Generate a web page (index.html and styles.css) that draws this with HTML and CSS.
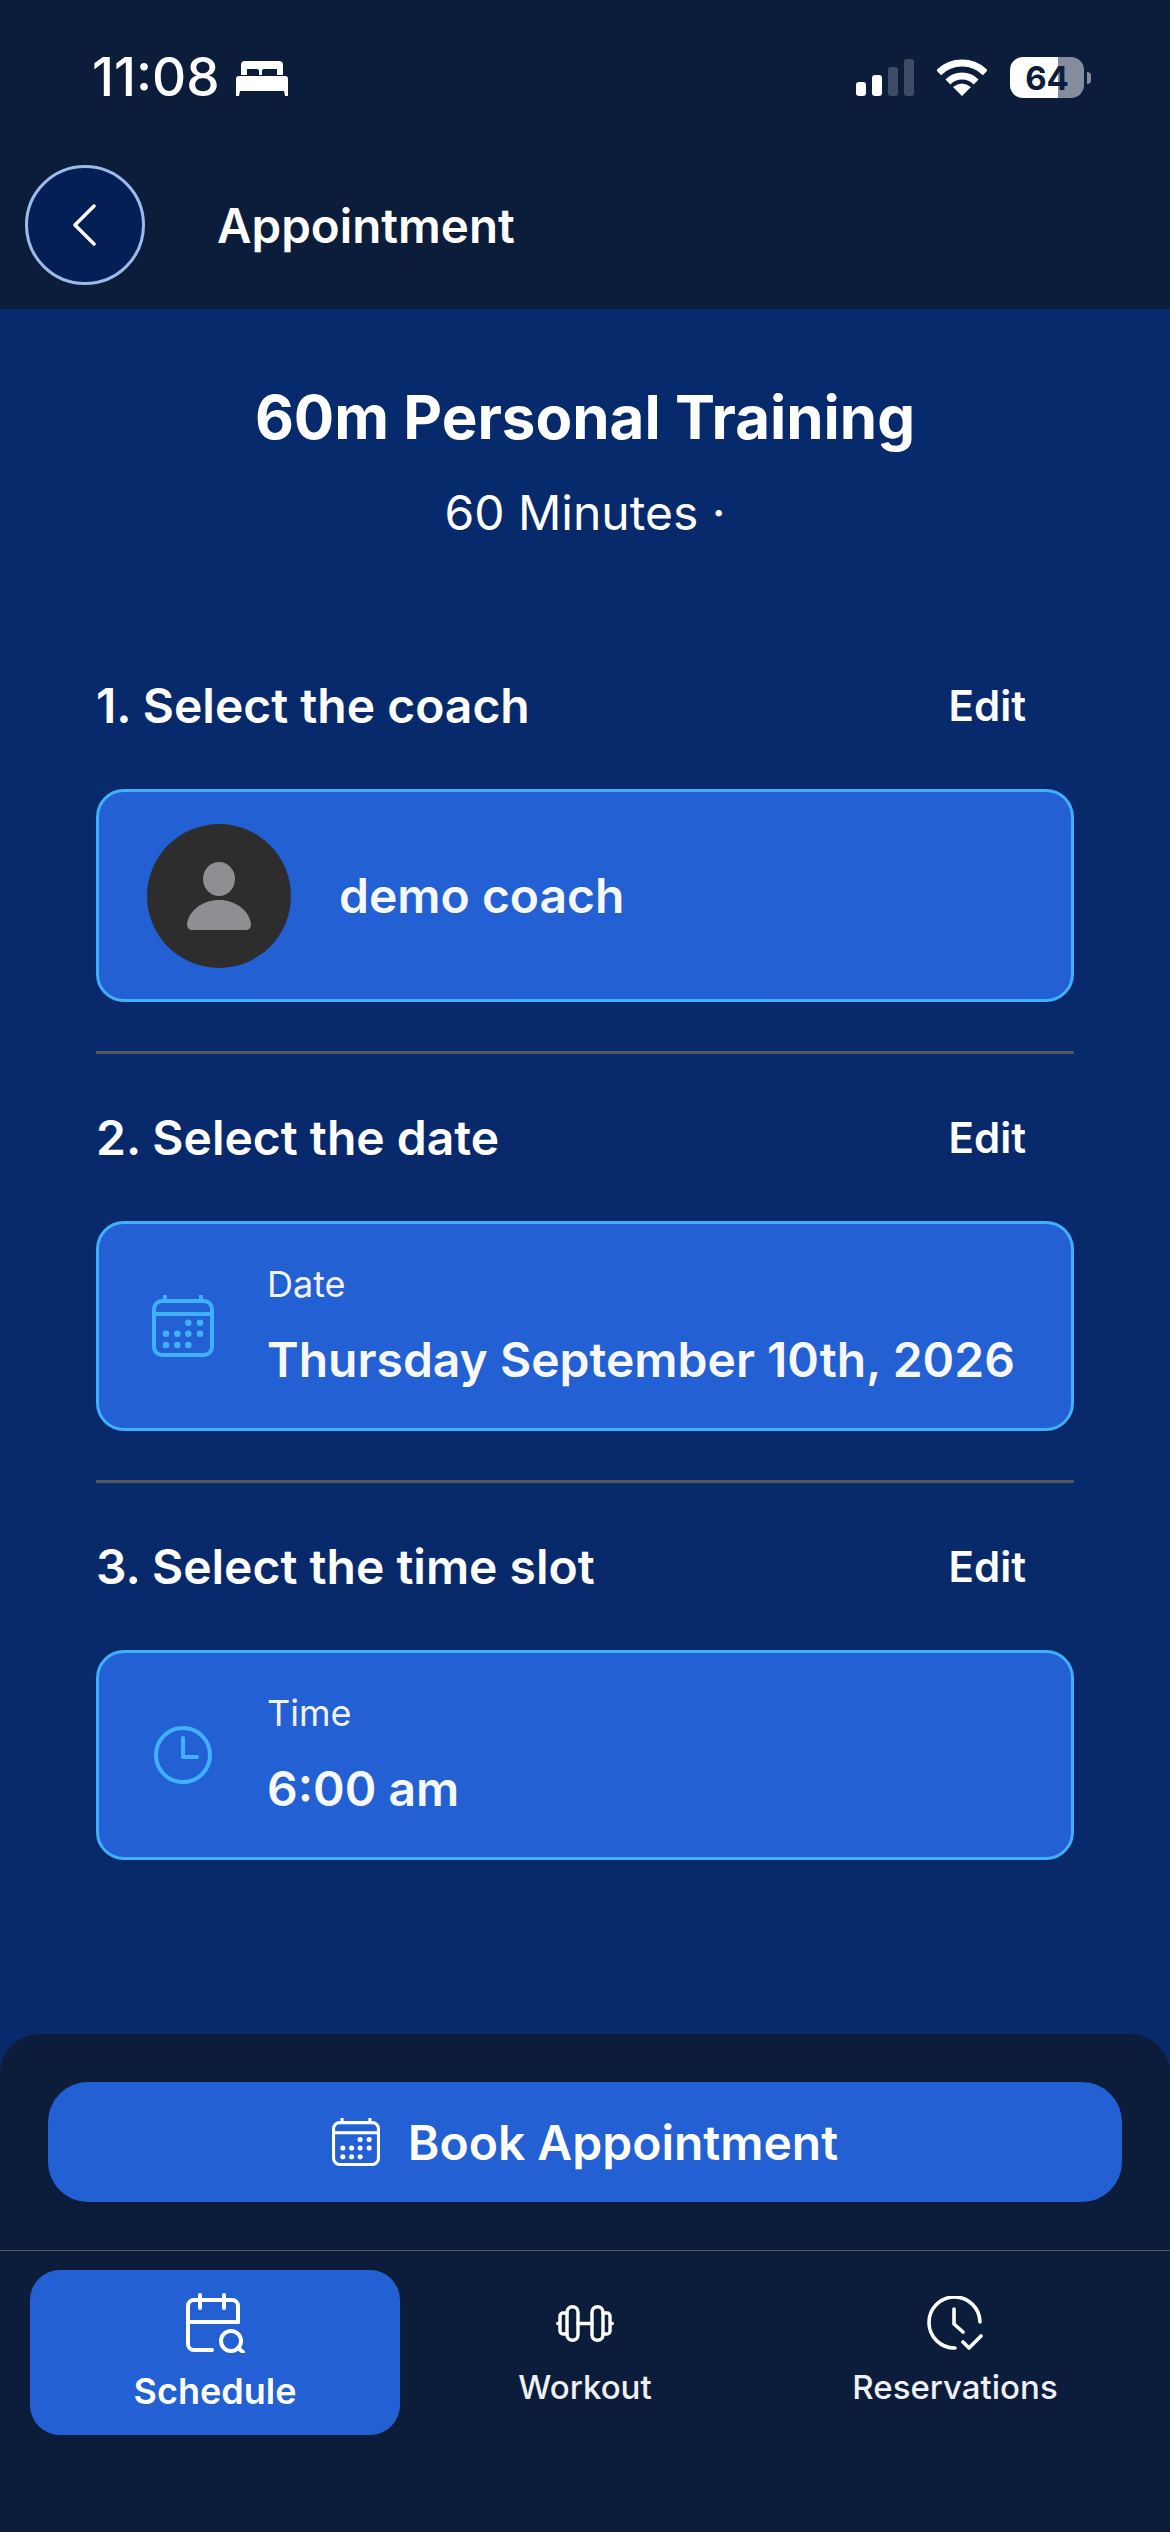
FILE: index.html
```html
<!DOCTYPE html>
<html lang="en">
<head>
  <meta charset="UTF-8" />
  <meta name="viewport" content="width=device-width, initial-scale=1" />
  <title>Appointment</title>
  <link rel="stylesheet" href="styles.css">
</head>
<body>
  <div class="screen">

    <header class="top">
      <div class="status">
        <div class="status-left">
          <span class="clock">11:08</span>
          <svg class="bed" width="52" height="35" viewBox="0 0 52 35" fill="#fff">
            <path fill-rule="evenodd" d="M9 0h34a4 4 0 0 1 4 4v10H5V4a4 4 0 0 1 4-4zM11 8v6h12V10a2 2 0 0 0-2-2zM28 8a2 2 0 0 0-2 2v4h15V8z"/>
            <path d="M3 15h46a3 3 0 0 1 3 3v17h-3l-1-5H4l-1 5H0V18a3 3 0 0 1 3-3z"/>
          </svg>
        </div>
        <div class="status-right">
          <svg width="58" height="37" viewBox="0 0 58 37">
            <rect x="0" y="23" width="10" height="14" rx="3" fill="#fff"/>
            <rect x="16" y="16" width="10" height="21" rx="3" fill="#fff"/>
            <rect x="32" y="8" width="10" height="29" rx="3" fill="#3e4d66"/>
            <rect x="48" y="0" width="10" height="37" rx="3" fill="#3e4d66"/>
          </svg>
          <svg width="50" height="37" viewBox="0 0 50 37" fill="none" stroke="#fff" stroke-width="7">
            <path d="M1.7 13.7a33 33 0 0 1 46.6 0"/>
            <path d="M10.9 22.9a20 20 0 0 1 28.2 0"/>
            <path d="M25 37l-9-9q9-7 18 0z" fill="#fff" stroke="none"/>
          </svg>
          <div class="battery">
            <div class="battery-body"><span class="battery-num">64</span></div>
            <div class="battery-tip"></div>
          </div>
        </div>
      </div>
      <div class="titlebar">
        <button class="back">
          <svg width="24" height="42" viewBox="0 0 24 42" fill="none" stroke="#fff" stroke-width="3.5" stroke-linecap="round" stroke-linejoin="round">
            <path d="M22 2L3 21l19 19"/>
          </svg>
        </button>
        <h1>Appointment</h1>
      </div>
    </header>

    <main class="content">
      <div class="intro">
        <h2>60m Personal Training</h2>
        <p>60 Minutes ·</p>
      </div>

      <section class="step">
        <div class="step-head"><h3>1. Select the coach</h3><a class="edit">Edit</a></div>
        <div class="card coach-card">
          <div class="avatar">
            <svg width="64" height="68" viewBox="0 0 64 68" fill="#8e8f92">
              <ellipse cx="32" cy="17" rx="16" ry="17"/>
              <path d="M0 62C2 48 16 38 32 38s30 10 32 24c0 4-2 6-6 6H6c-4 0-6-2-6-6z"/>
            </svg>
          </div>
          <span class="coach-name">demo coach</span>
        </div>
      </section>

      <section class="step">
        <div class="step-head"><h3>2. Select the date</h3><a class="edit">Edit</a></div>
        <div class="card">
          <svg class="card-icon" width="62" height="62" viewBox="0 0 62 62" fill="#3fb1fb">
            <g fill="none" stroke="#3fb1fb" stroke-width="4">
              <rect x="2" y="6" width="58" height="54" rx="8"/>
              <path d="M2 19h58"/>
            </g>
            <path d="M11 1a2 2 0 0 1 4 0v5h-4zM47 1a2 2 0 0 1 4 0v5h-4z"/>
            <circle cx="36.3" cy="27.7" r="3.3"/><circle cx="48" cy="27.7" r="3.3"/>
            <circle cx="14" cy="38.7" r="3.3"/><circle cx="25.3" cy="38.7" r="3.3"/><circle cx="36.3" cy="38.7" r="3.3"/><circle cx="48" cy="38.7" r="3.3"/>
            <circle cx="14" cy="50" r="3.3"/><circle cx="25.3" cy="50" r="3.3"/><circle cx="36.3" cy="50" r="3.3"/>
          </svg>
          <div class="card-text">
            <span class="label">Date</span>
            <span class="value">Thursday September 10th, 2026</span>
          </div>
        </div>
      </section>

      <section class="step">
        <div class="step-head"><h3>3. Select the time slot</h3><a class="edit">Edit</a></div>
        <div class="card">
          <svg class="card-icon" width="62" height="62" viewBox="0 0 62 62" fill="none" stroke="#3fb1fb" stroke-width="4" stroke-linecap="round" stroke-linejoin="round">
            <circle cx="31" cy="31" r="27"/>
            <path d="M31 14v19h14"/>
          </svg>
          <div class="card-text">
            <span class="label">Time</span>
            <span class="value">6:00 am</span>
          </div>
        </div>
      </section>
    </main>

    <footer class="bottom">
      <div class="book-wrap">
        <button class="book">
          <svg width="48" height="48" viewBox="0 0 62 62" fill="#fff">
            <g fill="none" stroke="#fff" stroke-width="4">
              <rect x="2" y="6" width="58" height="54" rx="8"/>
              <path d="M2 19h58"/>
            </g>
            <path d="M11 1a2 2 0 0 1 4 0v5h-4zM47 1a2 2 0 0 1 4 0v5h-4z"/>
            <circle cx="36.3" cy="27.7" r="3.3"/><circle cx="48" cy="27.7" r="3.3"/>
            <circle cx="14" cy="38.7" r="3.3"/><circle cx="25.3" cy="38.7" r="3.3"/><circle cx="36.3" cy="38.7" r="3.3"/><circle cx="48" cy="38.7" r="3.3"/>
            <circle cx="14" cy="50" r="3.3"/><circle cx="25.3" cy="50" r="3.3"/><circle cx="36.3" cy="50" r="3.3"/>
          </svg>
          Book Appointment
        </button>
      </div>
      <nav class="tabs">
        <a class="tab active">
          <div class="tab-icon">
            <svg width="60" height="60" viewBox="0 0 60 60" fill="none" stroke="#fff" stroke-width="4" stroke-linecap="round" stroke-linejoin="round">
              <path d="M27 57H9a6 6 0 0 1-6-6V13a6 6 0 0 1 6-6h38a6 6 0 0 1 6 6v16"/>
              <path d="M3 29h50M15 2v13M39 2v13"/>
              <circle cx="46" cy="48" r="10"/>
              <path d="M53 55l5 4"/>
            </svg>
          </div>
          <span>Schedule</span>
        </a>
        <a class="tab">
          <div class="tab-icon">
            <svg width="58" height="37" viewBox="0 0 58 37" fill="none" stroke="#fff" stroke-width="3.4" stroke-linecap="round" stroke-linejoin="round">
              <rect x="11" y="1.7" width="11" height="33.6" rx="5.5"/>
              <rect x="36" y="1.7" width="11" height="33.6" rx="5.5"/>
              <path d="M11 8H7a3 3 0 0 0-3 3v15a3 3 0 0 0 3 3h4M47 8h4a3 3 0 0 1 3 3v15a3 3 0 0 1-3 3h-4M22 18.5h14M4 18.5H1.7M54 18.5h2.3"/>
            </svg>
          </div>
          <span>Workout</span>
        </a>
        <a class="tab">
          <div class="tab-icon">
            <svg width="56" height="54" viewBox="0 0 56 54" fill="none" stroke="#fff" stroke-width="3.6" stroke-linecap="round" stroke-linejoin="round">
              <path d="M53 26a25.5 25.5 0 1 0-25 26"/>
              <path d="M27 13v15l9 8"/>
              <path d="M36 46l6 6 12-12"/>
            </svg>
          </div>
          <span>Reservations</span>
        </a>
      </nav>
    </footer>

  </div>
</body>
</html>
```

FILE: styles.css
```css
* { box-sizing: border-box; }
html, body { margin: 0; padding: 0; }
body { font-family: Inter, 'Liberation Sans', sans-serif; background: #0b1d3a; color: #fff; }
h1, h2, h3, p { margin: 0; }

.screen { width: 1170px; height: 2532px; display: flex; flex-direction: column; overflow: hidden; }

/* header */
.top { background: #0b1d3a; height: 309px; flex: none; }
.status { height: 165px; display: flex; justify-content: space-between; padding: 51px 79px 0 92px; }
.status-left { display: flex; align-items: flex-start; gap: 16px; }
.clock { font-size: 53px; line-height: 52px; font-weight: 500; }
.bed { margin-top: 10px; }
.status-right { display: flex; align-items: center; gap: 23px; height: 53px; }
.battery { display: flex; align-items: center; }
.battery-body { width: 74px; height: 41px; border-radius: 13px; background: linear-gradient(90deg, #fff 0 65%, #858d9c 65%); display: flex; align-items: center; justify-content: center; }
.battery-num { font-size: 33px; font-weight: 700; color: #0b1d3a; }
.battery-tip { width: 4px; height: 12px; background: #858d9c; border-radius: 0 6px 6px 0; margin-left: 3px; }

.titlebar { display: flex; align-items: center; padding-left: 25px; gap: 72px; }
.back { width: 120px; height: 120px; border-radius: 50%; background: #031f55; border: 3px solid #9dbbe8; display: flex; align-items: center; justify-content: center; padding: 0 2px 0 0; }
.titlebar h1 { font-size: 47.5px; font-weight: 600; }

/* main */
.content { flex: 1; background: linear-gradient(180deg, #072a6c 0%, #08296a 100%); padding: 72px 96px 0; }
.intro { text-align: center; }
.intro h2 { font-size: 60px; line-height: 72px; font-weight: 700; }
.intro p { font-size: 48px; line-height: 58px; margin-top: 31px; font-weight: 400; }

.step { padding-bottom: 49px; margin-bottom: 53px; border-bottom: 3px solid #55575f; }
.step:first-of-type { margin-top: 133px; }
.step:last-of-type { border-bottom: 0; }
.step-head { display: flex; justify-content: space-between; align-items: center; padding-right: 48px; height: 60px; margin-bottom: 54px; }
.step-head h3 { font-size: 48px; font-weight: 600; }
.edit { font-size: 42px; font-weight: 600; }

.card { height: 210px; background: #2260d4; border: 3px solid #3fb1fb; border-radius: 28px; display: flex; align-items: center; padding-left: 53px; gap: 53px; }
.coach-card { height: 213px; padding-left: 48px; gap: 48px; }
.avatar { width: 144px; height: 144px; border-radius: 50%; background: #2d2d2d; display: flex; align-items: center; justify-content: center; }
.coach-name { font-size: 48px; font-weight: 600; color: #f7f8fb; }
.card-icon { flex: none; }
.card-text { display: flex; flex-direction: column; gap: 24px; }
.label { font-size: 36px; line-height: 44px; color: #f0f3fa; font-weight: 400; }
.value { font-size: 48px; line-height: 60px; font-weight: 600; color: #f7f8fb; }

/* footer */
.bottom { height: 498px; flex: none; background: #0b1d3a; border-radius: 40px 40px 0 0; margin-top: -40px; position: relative; }
.book-wrap { height: 217px; padding: 48px 48px 0; border-bottom: 1px solid #55575f; }
.book { width: 100%; height: 120px; border: 0; border-radius: 40px; background: #2260d4; color: #fff; font-family: inherit; font-size: 48px; font-weight: 600; display: flex; align-items: center; justify-content: center; gap: 28px; }
.tabs { display: grid; grid-template-columns: repeat(3, 370px); padding: 19px 30px 0; }
.tab { height: 165px; border-radius: 30px; display: flex; flex-direction: column; align-items: center; padding-top: 23px; font-size: 33px; line-height: 40px; font-weight: 500; color: #eef0f4; gap: 14px; }
.tab-icon { height: 60px; display: flex; align-items: center; justify-content: center; }
.tab.active { background: #2260d4; color: #fff; font-weight: 600; font-size: 36px; gap: 18px; }
```
